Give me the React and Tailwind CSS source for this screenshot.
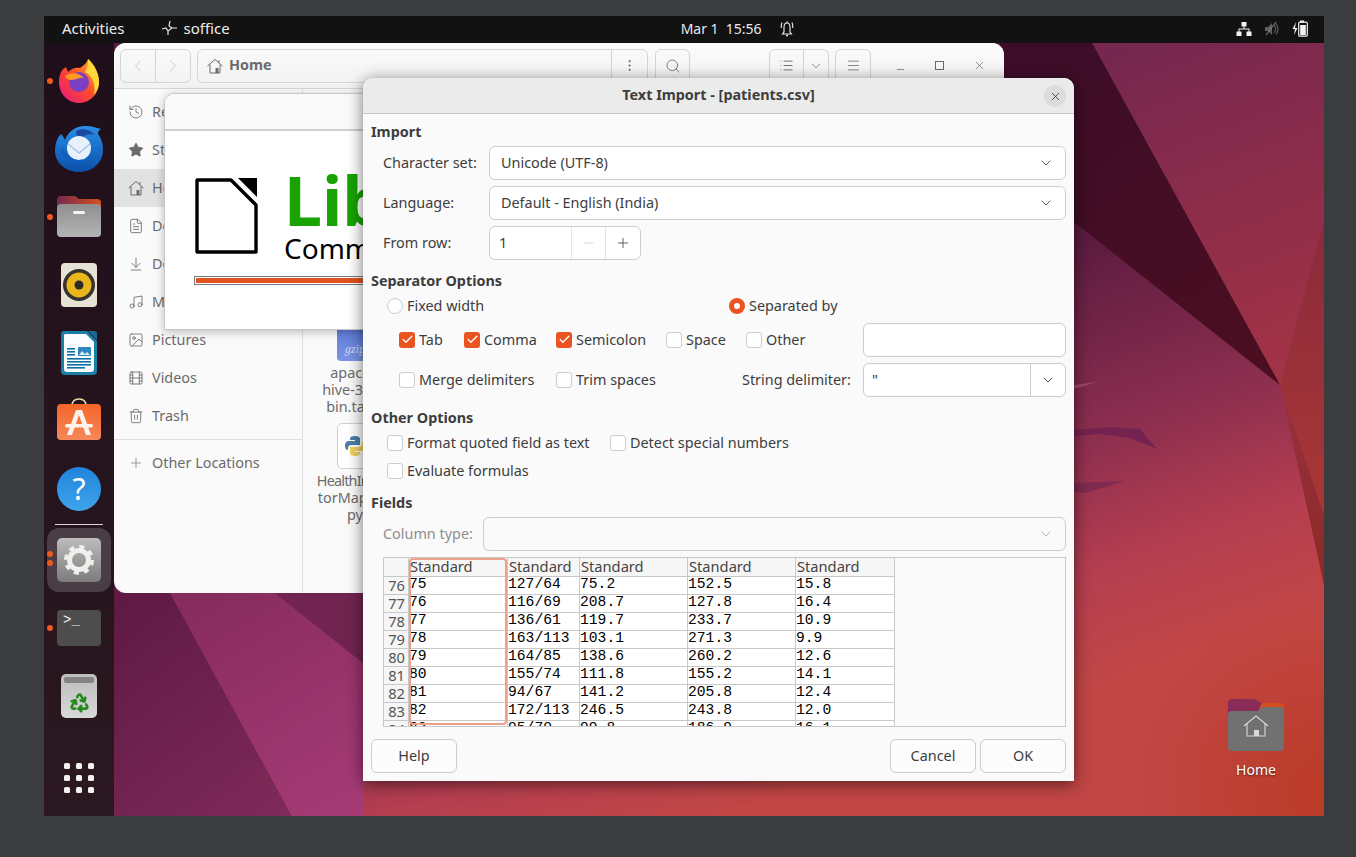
import { History, Star, FileText, ArrowDownToLine, Music, Image, Film, Trash2, Plus, ChevronLeft, ChevronRight, ChevronDown, Search, X, Minus, Menu, List, MoreVertical, Check, Recycle } from "lucide-react";

const rows = [
  ["76", "75", "127/64", "75.2", "152.5", "15.8"],
  ["77", "76", "116/69", "208.7", "127.8", "16.4"],
  ["78", "77", "136/61", "119.7", "233.7", "10.9"],
  ["79", "78", "163/113", "103.1", "271.3", "9.9"],
  ["80", "79", "164/85", "138.6", "260.2", "12.6"],
  ["81", "80", "155/74", "111.8", "155.2", "14.1"],
  ["82", "81", "94/67", "141.2", "205.8", "12.4"],
  ["83", "82", "172/113", "246.5", "243.8", "12.0"],
  ["84", "83", "95/70", "99.8", "186.9", "16.1"],
];

function HomeGlyph({ className = "" }) {
  return (
    <svg className={className} width="16" height="16" viewBox="0 0 16 16" fill="none" stroke="currentColor" strokeWidth="1">
      <path d="M0.5 8L8 1.5L15.5 8M12 4.5V2M3 6.5V15H13V6.5" />
      <rect x="8.5" y="10" width="3" height="5" fill="currentColor" stroke="none" />
    </svg>
  );
}

const places = [
  ["Recent", History],
  ["Starred", Star],
  ["Home", HomeGlyph],
  ["Documents", FileText],
  ["Downloads", ArrowDownToLine],
  ["Music", Music],
  ["Pictures", Image],
  ["Videos", Film],
  ["Trash", Trash2],
];

function Wallpaper() {
  return (
    <svg className="absolute inset-0" width="1280" height="773" viewBox="44 43 1280 773">
      <defs>
        <linearGradient id="base" gradientUnits="userSpaceOnUse" x1="1090" y1="230" x2="1230" y2="640">
          <stop offset="0" stopColor="#5a1b3f" />
          <stop offset="0.45" stopColor="#8c2e4f" />
          <stop offset="0.75" stopColor="#b53e50" />
          <stop offset="1" stopColor="#c14645" />
        </linearGradient>
        <radialGradient id="corner" gradientUnits="userSpaceOnUse" cx="1324" cy="790" r="190">
          <stop offset="0" stopColor="#bb3b26" stopOpacity="1" />
          <stop offset="1" stopColor="#bb3b26" stopOpacity="0" />
        </radialGradient>
        <linearGradient id="topFacet" gradientUnits="userSpaceOnUse" x1="1150" y1="43" x2="1280" y2="385">
          <stop offset="0" stopColor="#76274f" />
          <stop offset="1" stopColor="#a53345" />
        </linearGradient>
        <linearGradient id="darkFacet" gradientUnits="userSpaceOnUse" x1="1040" y1="60" x2="1260" y2="370">
          <stop offset="0" stopColor="#3d0d28" />
          <stop offset="1" stopColor="#4b0e20" />
        </linearGradient>
        <linearGradient id="sideFacet" gradientUnits="userSpaceOnUse" x1="1324" y1="222" x2="1300" y2="500">
          <stop offset="0" stopColor="#8a2a3c" />
          <stop offset="1" stopColor="#a83736" />
        </linearGradient>
        <linearGradient id="wedge" gradientUnits="userSpaceOnUse" x1="1280" y1="385" x2="1324" y2="600">
          <stop offset="0" stopColor="#9a3040" />
          <stop offset="1" stopColor="#8a2a24" />
        </linearGradient>
        <linearGradient id="leftDark" gradientUnits="userSpaceOnUse" x1="130" y1="600" x2="290" y2="810">
          <stop offset="0" stopColor="#5f1a45" />
          <stop offset="1" stopColor="#7f2a59" />
        </linearGradient>
        <linearGradient id="leftLight" gradientUnits="userSpaceOnUse" x1="210" y1="600" x2="340" y2="810">
          <stop offset="0" stopColor="#882c5f" />
          <stop offset="1" stopColor="#a53a75" />
        </linearGradient>
      </defs>
      <rect x="44" y="43" width="1280" height="773" fill="url(#base)" />
      <rect x="1100" y="600" width="224" height="216" fill="url(#corner)" />
      <polygon points="1092,43 1280,385 1324,222 1324,43" fill="url(#topFacet)" />
      <polygon points="1000,43 1092,43 1280,385 1074,222 1000,180" fill="url(#darkFacet)" />
      <polygon points="1280,385 1324,222 1324,515" fill="url(#sideFacet)" />
      <polygon points="1280,385 1324,515 1324,585" fill="url(#wedge)" />
      <polygon points="1074,389 1097,382 1074,385" fill="#a0486f" />
      <polygon points="1074,430 1110,427 1140,429 1157,449 1130,438 1100,434 1074,436" fill="#742350" />
      <polygon points="1074,483 1125,481 1085,493 1074,492" fill="#7f2a50" />
      <polygon points="114,593 170,593 292,816 114,816" fill="url(#leftDark)" />
      <polygon points="170,593 275,593 363,663 363,816 292,816" fill="url(#leftLight)" />
      <polygon points="275,593 363,593 363,663" fill="#722450" />
    </svg>
  );
}

function Firefox() {
  return (
    <svg width="44" height="46" viewBox="0 0 44 46">
      <defs>
        <linearGradient id="ffBody" x1="0" y1="1" x2="1" y2="0">
          <stop offset="0" stopColor="#e31587" />
          <stop offset="0.5" stopColor="#ff4a2a" />
          <stop offset="1" stopColor="#ffbd2e" />
        </linearGradient>
      </defs>
      <path d="M2 24C2 16 5 11 9 9L11 14C15 10 19 9 23 10C27 7 30 5 31 1C34 3 42 12 42 24C42 36 33 45 22 45C11 45 2 36 2 24Z" fill="url(#ffBody)" />
      <path d="M31 1C36 6 42 14 42 24C42 30 39 34 37 37C39 28 36 18 28 14C31 10 31 5 31 1Z" fill="#ffd93a" />
      <circle cx="22" cy="24" r="10" fill="#7a3fc4" />
      <path d="M8 18C14 14 22 14 27 20C22 19 20 22 14 22C11 22 9 20 8 18Z" fill="#ff9a1f" />
    </svg>
  );
}

function Thunderbird() {
  return (
    <svg width="48" height="48" viewBox="0 0 48 48">
      <defs>
        <linearGradient id="tbBody" x1="0" y1="0" x2="0" y2="1">
          <stop offset="0" stopColor="#2a8fe8" />
          <stop offset="1" stopColor="#0a4fa8" />
        </linearGradient>
      </defs>
      <path d="M6 9C8 11 9 13 10 15C13 6 22 0 32 1C38 1 44 4 46 4C43 6 43 7 43 9C47 14 48 20 48 25C48 38 37 47 24 47C11 47 0 38 0 26C0 19 2 13 6 9Z" fill="url(#tbBody)" />
      <path d="M21 6C27 3 35 4 40 10C33 8 28 11 27 14C24 13 21 11 21 6Z" fill="#1a4aa0" />
      <circle cx="24" cy="23" r="12" fill="#e8f0fb" />
      <path d="M13 19L24 28L35 19" fill="none" stroke="#a8c4ea" strokeWidth="1.5" />
      <path d="M7 24C9 33 17 38 28 36" fill="none" stroke="#0d5ec0" strokeWidth="3" />
    </svg>
  );
}

function FilesIcon() {
  return (
    <svg width="44" height="42" viewBox="0 0 44 42">
      <defs>
        <linearGradient id="filesTab" x1="0" y1="0" x2="1" y2="0">
          <stop offset="0" stopColor="#77294f" />
          <stop offset="1" stopColor="#d5501f" />
        </linearGradient>
        <linearGradient id="filesBody" x1="0" y1="0" x2="0" y2="1">
          <stop offset="0" stopColor="#8f8f8f" />
          <stop offset="1" stopColor="#b4b4b4" />
        </linearGradient>
      </defs>
      <path d="M0 4Q0 0 4 0H18L22 3H40Q44 3 44 7V14H0Z" fill="url(#filesTab)" />
      <rect y="8" width="44" height="33" rx="4" fill="url(#filesBody)" />
      <rect x="16" y="15" width="12" height="3" rx="1.5" fill="#f4f4f4" />
    </svg>
  );
}

function RhythmboxIcon() {
  return (
    <svg width="36" height="44" viewBox="0 0 36 44">
      <rect width="36" height="44" rx="4" fill="#e6e2d6" />
      <circle cx="18" cy="22" r="16" fill="#36332f" />
      <circle cx="18" cy="22" r="12.5" fill="#e9b61c" />
      <circle cx="18" cy="22" r="4.5" fill="#2b2a28" />
    </svg>
  );
}

function WriterIcon() {
  return (
    <svg width="36" height="44" viewBox="0 0 36 44">
      <path d="M3 0H26L36 10V40Q36 44 32 44H4Q0 44 0 40V3Q0 0 3 0Z" fill="#1a7ea8" />
      <path d="M4 3H25L33 11V38Q33 41 30 41H6Q3 41 3 38V4Z" fill="#fbfcfd" />
      <path d="M27 0H33Q36 0 36 3V9Z" fill="#176a92" />
      <rect x="17" y="16" width="13" height="9" rx="1" fill="#2a86c4" />
      <path d="M18 24L21 20L24 23L26 21L29 24Z" fill="#dcecf7" />
      {[17, 20, 23].map((y) => (
        <rect key={y} x="6" y={y} width="8" height="1.6" fill="#0f6fa8" />
      ))}
      {[27, 30, 33].map((y) => (
        <rect key={y} x="6" y={y} width="24" height="1.6" fill="#0f6fa8" />
      ))}
      <rect x="6" y="36" width="18" height="1.6" fill="#0f6fa8" />
    </svg>
  );
}

function AppCenterIcon() {
  return (
    <svg className="mb-[4px]" width="44" height="42" viewBox="0 0 44 42">
      <defs>
        <linearGradient id="bag" x1="0" y1="0" x2="0" y2="1">
          <stop offset="0" stopColor="#f4652a" />
          <stop offset="1" stopColor="#f5885a" />
        </linearGradient>
      </defs>
      <path d="M15 8Q15 1 22 1Q29 1 29 8" fill="none" stroke="#f2d9a8" strokeWidth="1.6" />
      <rect y="6" width="44" height="36" rx="4" fill="url(#bag)" />
      <path d="M10 37L19 12H25L34 37H29L22 17L15 37Z" fill="#fff2ea" />
      <rect x="8" y="26" width="28" height="3.4" rx="1.7" fill="#fff2ea" />
    </svg>
  );
}

function SettingsIcon() {
  return (
    <div className="flex h-[44px] w-[44px] items-center justify-center rounded-[5px] bg-gradient-to-b from-[#bdbdbd] to-[#7c7c7c]">
      <svg width="30" height="30" viewBox="0 0 30 30">
        <circle cx="15" cy="15" r="13" fill="none" stroke="#f1efec" strokeWidth="4" strokeDasharray="5 5.2" />
        <circle cx="15" cy="15" r="9.5" fill="none" stroke="#f1efec" strokeWidth="5" />
      </svg>
    </div>
  );
}

function Dot({ className }) {
  return <span className={`absolute left-[3px] h-[6px] w-[6px] rounded-full bg-[#ee5a22] ${className}`}></span>;
}

function Dock() {
  const slot = "relative flex h-[68px] w-full shrink-0 items-center justify-center";
  return (
    <div className="relative flex h-full w-[70px] flex-col items-center bg-gradient-to-b from-[#1f0f1a] to-[#2b1820] pt-[4px]">
      <div className={slot}><Firefox /><Dot className="top-[31px]" /></div>
      <div className={slot}><Thunderbird /></div>
      <div className={slot}><FilesIcon /><Dot className="top-[31px]" /></div>
      <div className={slot}><RhythmboxIcon /></div>
      <div className={slot}><WriterIcon /></div>
      <div className={slot}><AppCenterIcon /></div>
      <div className={slot}>
        <div className="flex h-[44px] w-[44px] items-center justify-center rounded-full bg-gradient-to-b from-[#1f84dc] to-[#3fa4ea] text-[30px] leading-none text-white">?</div>
      </div>
      <div className="mt-[1px] h-px w-[48px] shrink-0 bg-[#d8d4d6]"></div>
      <div className={`${slot} h-[69px]`}>
        <div className="flex h-[64px] w-[64px] items-center justify-center rounded-[12px] bg-[#4b3d45]">
          <SettingsIcon />
        </div>
        <Dot className="top-[26px]" />
        <Dot className="top-[35px]" />
      </div>
      <div className={slot}>
        <div className="h-[36px] w-[44px] rounded-[4px] bg-[#4d4d4d] pl-[6px] font-['Liberation_Mono',monospace] text-[14px] leading-[20px] text-[#eeeeee]">&gt;_</div>
        <Dot className="top-[31px]" />
      </div>
      <div className={slot}>
        <div className="flex h-[44px] w-[36px] flex-col items-center rounded-[5px] bg-gradient-to-b from-[#bdbdbd] to-[#d8d8d8] pt-[3px]">
          <div className="h-[6px] w-[30px] rounded-[2px] bg-[#838383]"></div>
          <Recycle size={21} strokeWidth={3} className="mt-[9px] text-[#258a1c]" />
        </div>
      </div>
      <div className="mt-[33px] grid grid-cols-3 gap-[6px]">
        {[1, 2, 3, 4, 5, 6, 7, 8, 9].map((d) => (
          <span key={d} className="h-[6px] w-[6px] rounded-[1.5px] bg-[#f2f2f2]"></span>
        ))}
      </div>
    </div>
  );
}

function TopBar() {
  return (
    <div className="relative flex h-[27px] w-full shrink-0 items-center bg-[#121212] pb-[2px] text-[15px] text-[#eeeeee]">
      <span className="ml-[18px]">Activities</span>
      <svg className="ml-[36px]" width="17" height="17" viewBox="0 0 17 17" fill="none" stroke="#e8e8e8" strokeWidth="1.2">
        <path d="M1 9L5 8L7 11L11 8L16 8M7 11V15M9 1L8 6L11 8" />
      </svg>
      <span className="ml-[6px]">soffice</span>
      <div className="ml-[451px] flex w-[81px] justify-between whitespace-nowrap text-[14px] text-[#e8e8e8]">
        <span>Mar 1</span>
        <span>15:56</span>
      </div>
      <svg className="ml-[17px]" width="16" height="17" viewBox="0 0 16 17" fill="none" stroke="#eeeeee" strokeWidth="1.1">
        <path d="M5 12V7Q5 3 8 3Q11 3 11 7V12L12.5 14H3.5L5 12Z" />
        <path d="M3 2.5Q2 5 2.2 8M13 2.5Q14 5 13.8 8M8 3V1.5" />
        <circle cx="8" cy="15.5" r="1" fill="#eeeeee" stroke="none" />
      </svg>
      <div className="ml-auto mr-[16px] flex items-center gap-[12px]">
        <svg width="16" height="14" viewBox="0 0 16 14" fill="#f2f2f2">
          <rect x="5.5" y="0" width="5" height="4.5" />
          <rect x="0.5" y="9.5" width="5" height="4.5" />
          <rect x="10.5" y="9.5" width="5" height="4.5" />
          <path d="M7.5 4H8.5V6.5H13.5V10H12.5V7.5H3.5V10H2.5V6.5H7.5Z" />
        </svg>
        <svg width="16" height="16" viewBox="0 0 16 16" fill="#5e5e5e">
          <path d="M1 6H4L8 2V14L4 10H1Z" />
          <path d="M10 4Q13 8 10 12M12 2.5Q16 8 12 13.5" fill="none" stroke="#5e5e5e" strokeWidth="1.2" />
          <path d="M2 14L12 1" stroke="#8a8a8a" strokeWidth="1" />
        </svg>
        <svg width="16" height="17" viewBox="0 0 16 17" fill="#f2f2f2">
          <path d="M4 2L0.5 9H3L2 15L5.5 8H3Z" />
          <rect x="8" y="0.5" width="4" height="2" />
          <rect x="6.7" y="2.2" width="8.6" height="14" rx="1.3" fill="none" stroke="#f2f2f2" strokeWidth="1.2" />
          <rect x="8.2" y="5" width="5.6" height="10" />
        </svg>
      </div>
    </div>
  );
}

function FileManager() {
  return (
    <div className="absolute left-[70px] top-0 flex h-[550px] w-[890px] flex-col overflow-hidden rounded-[12px] bg-[#fafafa] text-[14.4px] text-[#6b6b6b]">
      <div className="flex h-[46px] shrink-0 items-center border-b border-[#d6d6d6] bg-gradient-to-b from-[#fbfbfb] to-[#f2f2f2] pl-[6px]">
        <div className="flex h-[34px] w-[71px] rounded-[6px] border border-[#d4d4d4]">
          <div className="flex flex-1 items-center justify-center border-r border-[#d4d4d4]">
            <ChevronLeft size={20} strokeWidth={1} className="text-[#c4c4c4]" />
          </div>
          <div className="flex flex-1 items-center justify-center">
            <ChevronRight size={20} strokeWidth={1} className="text-[#c4c4c4]" />
          </div>
        </div>
        <div className="ml-[6px] flex h-[34px] w-[451px] items-center rounded-[6px] border border-[#d4d4d4] pl-[9px]">
          <HomeGlyph className="text-[#6b6b6b]" />
          <span className="mb-[1px] ml-[6px] font-bold text-[#6b6b6b]">Home</span>
          <div className="ml-auto flex h-full w-[36px] items-center justify-center border-l border-[#d4d4d4]">
            <MoreVertical size={15} strokeWidth={1.6} className="text-[#6b6b6b]" />
          </div>
        </div>
        <div className="ml-[7px] flex h-[34px] w-[35px] items-center justify-center rounded-[6px] border border-[#d4d4d4]">
          <Search size={16} strokeWidth={1.3} className="text-[#6b6b6b]" />
        </div>
        <div className="ml-[79px] flex h-[34px] w-[60px] rounded-[6px] border border-[#d4d4d4]">
          <div className="flex w-[34px] items-center justify-center border-r border-[#d4d4d4]">
            <List size={15} strokeWidth={1.5} className="text-[#6b6b6b]" />
          </div>
          <div className="flex flex-1 items-center justify-center">
            <ChevronDown size={14} strokeWidth={1.3} className="text-[#6b6b6b]" />
          </div>
        </div>
        <div className="ml-[6px] flex h-[34px] w-[36px] items-center justify-center rounded-[6px] border border-[#d4d4d4]">
          <Menu size={15} strokeWidth={1.3} className="text-[#6b6b6b]" />
        </div>
        <Minus size={11} strokeWidth={1.6} className="ml-[24px] mt-[8px] text-[#6b6b6b]" />
        <div className="ml-[29px] h-[9px] w-[9px] border border-[#6b6b6b]"></div>
        <X size={13} strokeWidth={1.4} className="ml-[29px] text-[#6b6b6b]" />
      </div>
      <div className="flex flex-1">
        <div className="w-[189px] shrink-0 border-r border-[#e0e0e0] pt-[4px]">
          {places.map(([name, Icon]) => (
            <div key={name} className={`flex h-[38px] items-center pl-[14px] ${name === "Home" ? "bg-[#e2e2e2]" : ""}`}>
              <Icon size={16} strokeWidth={1.3} fill={name === "Starred" ? "#6b6b6b" : "none"} className="text-[#6b6b6b]" />
              <span className="mb-[1px] ml-[8px]">{name}</span>
            </div>
          ))}
          <div className="mt-[4px] flex h-[47px] items-center border-t border-[#e0e0e0] pl-[14px]">
            <Plus size={16} strokeWidth={1} className="text-[#6b6b6b]" />
            <span className="mb-[1px] ml-[8px]">Other Locations</span>
          </div>
        </div>
        <div className="relative flex-1 bg-[#fafafa]">
          <div className="absolute left-[12px] top-[236px] flex w-[80px] flex-col items-center text-center leading-[17px]">
            <div className="flex h-[36px] w-[36px] items-end justify-center rounded-b-[4px] bg-gradient-to-b from-[#5a78d8] to-[#7c94e4] pb-[3px] font-serif text-[12px] italic text-[#c8d4f4]">gzip</div>
            <span className="ml-[4px] mt-[3px] text-[#6b6b6b]">apache-<br />hive-3.1.2-<br />bin.tar.gz</span>
          </div>
          <div className="absolute left-[12px] top-[334px] flex w-[80px] flex-col items-center text-center leading-[17px]">
            <div className="flex h-[46px] w-[36px] items-center justify-center rounded-[5px] border border-[#cfcfcf] bg-white">
              <svg width="20" height="22" viewBox="0 0 20 22">
                <path d="M10 1Q15 1 15 4V10H7Q3 10 3 13V15Q0 15 0 11Q0 6 4 6H10V5H5V4Q5 1 10 1Z" fill="#4d7da8" />
                <path d="M10 21Q5 21 5 18V12H13Q17 12 17 9V7Q20 7 20 11Q20 16 16 16H10V17H15V18Q15 21 10 21Z" fill="#f0d060" />
              </svg>
            </div>
            <span className="mt-[3px]"><span className="tracking-[-0.8px]">HealthIndica</span><br />torMapper.<br />py</span>
          </div>
        </div>
      </div>
    </div>
  );
}

function Splash() {
  return (
    <div className="absolute left-[120px] top-[50px] h-[237px] w-[560px] overflow-hidden rounded-t-[10px] border border-[#c8c8c8] bg-white shadow-[0_2px_10px_rgba(0,0,0,0.25)]">
      <div className="h-[37px] border-b-2 border-[#cfcfcf] bg-[#fafafa]"></div>
      <div className="flex pl-[30px] pt-[47px]">
        <svg width="63" height="76" viewBox="0 0 63 76">
          <path d="M2 2H36L61 27V74H2Z" fill="white" stroke="black" strokeWidth="3.4" strokeLinejoin="round" />
          <path d="M43 0H62V19Z" fill="black" />
        </svg>
        <div className="ml-[26px] flex flex-col">
          <span className="mt-[-18px] text-[68px] font-bold leading-[80px] text-[#18a303]">LibreOffice</span>
          <span className="mt-[-8px] text-[28px] leading-[32px] text-black">Community</span>
        </div>
      </div>
      <div className="ml-[29px] mt-[12px] h-[9px] w-[500px] border border-[#7a7a7a] bg-white p-[1px]">
        <div className="h-full w-full bg-[#e0521f]"></div>
      </div>
    </div>
  );
}

function Heading({ children, className = "" }) {
  return <div className={`h-[20px] font-bold leading-[19px] ${className}`}>{children}</div>;
}

function Select({ text, disabled, className = "" }) {
  return (
    <div className={`flex h-[34px] flex-1 items-center rounded-[6px] border border-[#cdcdcd] pl-[11px] pr-[11px] ${disabled ? "bg-[#fafafa]" : "bg-white"} ${className}`}>
      <span className="mb-[1px]">{text}</span>
      <ChevronDown size={16} strokeWidth={1.3} className={`ml-auto ${disabled ? "text-[#a8a8a8]" : "text-[#3d3d3d]"}`} />
    </div>
  );
}

function Field({ label, children }) {
  return (
    <div className="flex h-[34px] items-center pl-[12px]">
      <span className="mb-[1px] w-[106px] shrink-0">{label}</span>
      {children}
    </div>
  );
}

function Checkbox({ label, checked, className = "" }) {
  return (
    <div className={`flex items-center whitespace-nowrap ${className}`}>
      {checked ? (
        <div className="flex h-[16px] w-[16px] items-center justify-center rounded-[3px] bg-[#e95420]">
          <Check size={13} strokeWidth={2.4} className="text-white" />
        </div>
      ) : (
        <div className="h-[16px] w-[16px] rounded-[3px] border border-[#cdcdcd] bg-white"></div>
      )}
      <span className="mb-[1px] ml-[4px]">{label}</span>
    </div>
  );
}

function Radio({ label, checked, className = "" }) {
  return (
    <div className={`flex items-center whitespace-nowrap ${className}`}>
      {checked ? (
        <div className="flex h-[16px] w-[16px] items-center justify-center rounded-full bg-[#e95420]">
          <div className="h-[6px] w-[6px] rounded-full bg-white"></div>
        </div>
      ) : (
        <div className="h-[16px] w-[16px] rounded-full border border-[#cdcdcd] bg-white"></div>
      )}
      <span className="mb-[1px] ml-[4px]">{label}</span>
    </div>
  );
}

function Button({ children, className = "" }) {
  return <div className={`flex h-[34px] w-[86px] items-center justify-center rounded-[6px] border border-[#cdcdcd] bg-[#fcfcfc] pb-[1px] ${className}`}>{children}</div>;
}

function PreviewTable() {
  const cols = "grid grid-cols-[25px_99px_72px_108px_108px_99px]";
  const cell = "h-[18px] border-b border-r border-[#c8c8c8]";
  return (
    <div className="relative mt-[6px] ml-[12px] h-[170px] overflow-hidden border border-[#c8c8c8] bg-[#fafafa] text-[14.67px]">
      <div className={`${cols} w-[511px]`}>
        <div className={`${cell} h-[19px] bg-[#f6f6f6]`}></div>
        {[1, 2, 3, 4, 5].map((c) => (
          <div key={c} className={`${cell} h-[19px] bg-[#f6f6f6] pl-[1px] leading-[16px] text-[#444444]`}>Standard</div>
        ))}
        {rows.map((r) => (
          <div key={r[0]} className="contents">
            <div className={`${cell} bg-[#f6f6f6] pr-[3px] text-right leading-[16px] text-[#555555]`}>{r[0]}</div>
            {r.slice(1).map((v, i) => (
              <div key={i} className={`${cell} bg-white font-['Liberation_Mono',monospace] leading-[14px] text-black`}>{v}</div>
            ))}
          </div>
        ))}
      </div>
      <div className="absolute left-[25px] top-0 h-[167px] w-[98px] rounded-[4px] border-2 border-[#eda08a]"></div>
    </div>
  );
}

function TextImport() {
  return (
    <div className="absolute left-[319px] top-[35px] flex h-[703px] w-[711px] flex-col overflow-hidden rounded-t-[10px] bg-[#fafafa] text-[14.4px] text-[#3d3d3d] shadow-[0_3px_16px_rgba(0,0,0,0.55)]">
      <div className="relative flex h-[36px] shrink-0 items-center justify-center border-b border-[#c8c8c8] bg-[#ebebeb] pb-[1px] font-bold">
        Text Import - [patients.csv]
        <div className="absolute right-[8px] top-[7px] flex h-[22px] w-[22px] items-center justify-center rounded-full bg-[#dcdcdc]">
          <X size={13} strokeWidth={1.6} />
        </div>
      </div>
      <div className="flex flex-1 flex-col px-[8px] pt-[8px]">
        <Heading>Import</Heading>
        <div className="mt-[4px] flex flex-col gap-[6px]">
          <Field label="Character set:"><Select text="Unicode (UTF-8)" /></Field>
          <Field label="Language:"><Select text="Default - English (India)" /></Field>
          <Field label="From row:">
            <div className="flex h-[34px] w-[152px] items-center rounded-[6px] border border-[#cdcdcd] bg-white pl-[9px]">
              <span className="mb-[1px] w-[72px]">1</span>
              <div className="flex h-full w-[34px] items-center justify-center border-l border-[#e4e4e4]">
                <Minus size={14} strokeWidth={1} className="text-[#c0c0c0]" />
              </div>
              <div className="flex h-full flex-1 items-center justify-center border-l border-[#e4e4e4]">
                <Plus size={16} strokeWidth={1.2} />
              </div>
            </div>
          </Field>
        </div>
        <Heading className="mt-[11px]">Separator Options</Heading>
        <div className="mt-[5px] flex h-[20px] items-center pl-[16px]">
          <Radio label="Fixed width" className="w-[342px]" />
          <Radio checked label="Separated by" />
        </div>
        <div className="mt-[7px] flex h-[34px] items-center pl-[28px]">
          <Checkbox checked label="Tab" className="w-[65px]" />
          <Checkbox checked label="Comma" className="w-[92px]" />
          <Checkbox checked label="Semicolon" className="w-[110px]" />
          <Checkbox label="Space" className="w-[80px]" />
          <Checkbox label="Other" className="w-[117px]" />
          <div className="h-[34px] flex-1 rounded-[6px] border border-[#cdcdcd] bg-white"></div>
        </div>
        <div className="mt-[6px] flex h-[34px] items-center pl-[28px]">
          <Checkbox label="Merge delimiters" className="w-[157px]" />
          <Checkbox label="Trim spaces" className="w-[186px]" />
          <span className="mb-[1px] w-[121px] whitespace-nowrap">String delimiter:</span>
          <div className="flex h-[34px] flex-1 items-center rounded-[6px] border border-[#cdcdcd] bg-white pl-[8px]">
            <span className="mb-[1px] flex-1">"</span>
            <div className="flex h-full w-[35px] items-center justify-center border-l border-[#cdcdcd]">
              <ChevronDown size={16} strokeWidth={1.3} />
            </div>
          </div>
        </div>
        <Heading className="mt-[11px]">Other Options</Heading>
        <div className="mt-[5px] flex h-[20px] items-center pl-[16px]">
          <Checkbox label="Format quoted field as text" className="w-[223px]" />
          <Checkbox label="Detect special numbers" />
        </div>
        <div className="mt-[8px] flex h-[20px] items-center pl-[16px]">
          <Checkbox label="Evaluate formulas" />
        </div>
        <Heading className="mt-[12px]">Fields</Heading>
        <div className="mt-[4px] flex h-[34px] items-center pl-[12px]">
          <span className="mb-[1px] w-[100px] shrink-0 text-[#8e8e8e]">Column type:</span>
          <Select disabled text="" />
        </div>
        <PreviewTable />
        <div className="mt-[12px] flex">
          <Button>Help</Button>
          <Button className="ml-auto">Cancel</Button>
          <Button className="ml-[4px]">OK</Button>
        </div>
      </div>
    </div>
  );
}

export default function App() {
  return (
    <div className="h-[857px] w-[1356px] overflow-hidden bg-[#3b3c3e] pl-[44px] pt-[16px] font-['Noto_Sans',sans-serif]">
      <div className="flex h-[800px] w-[1280px] flex-col overflow-hidden">
        <TopBar />
        <div className="relative flex-1">
          <Wallpaper />
          <Dock />
          <div className="absolute left-[1172px] top-[656px] flex w-[80px] flex-col items-center">
            <svg width="56" height="52" viewBox="0 0 56 52">
              <path d="M0 4Q0 0 4 0H26L34 4H52Q56 4 56 8V16H0Z" fill="#8a2c5a" />
              <path d="M34 4H52Q56 4 56 8V12H30Z" fill="#d5501f" />
              <path d="M0 16Q0 12 4 12H30L34 8H52Q56 8 56 12V48Q56 52 52 52H4Q0 52 0 48Z" fill="#717171" />
              <path d="M16 27L28 17L40 27M19 25V37H37V25" fill="none" stroke="#d8d8d8" strokeWidth="1.1" />
              <rect x="26" y="31" width="5" height="6" fill="#d8d8d8" />
            </svg>
            <span className="mt-[9px] text-[14px] leading-[20px] text-white [text-shadow:0_1px_2px_rgba(0,0,0,0.6)]">Home</span>
          </div>
          <FileManager />
          <Splash />
          <TextImport />
        </div>
      </div>
    </div>
  );
}
